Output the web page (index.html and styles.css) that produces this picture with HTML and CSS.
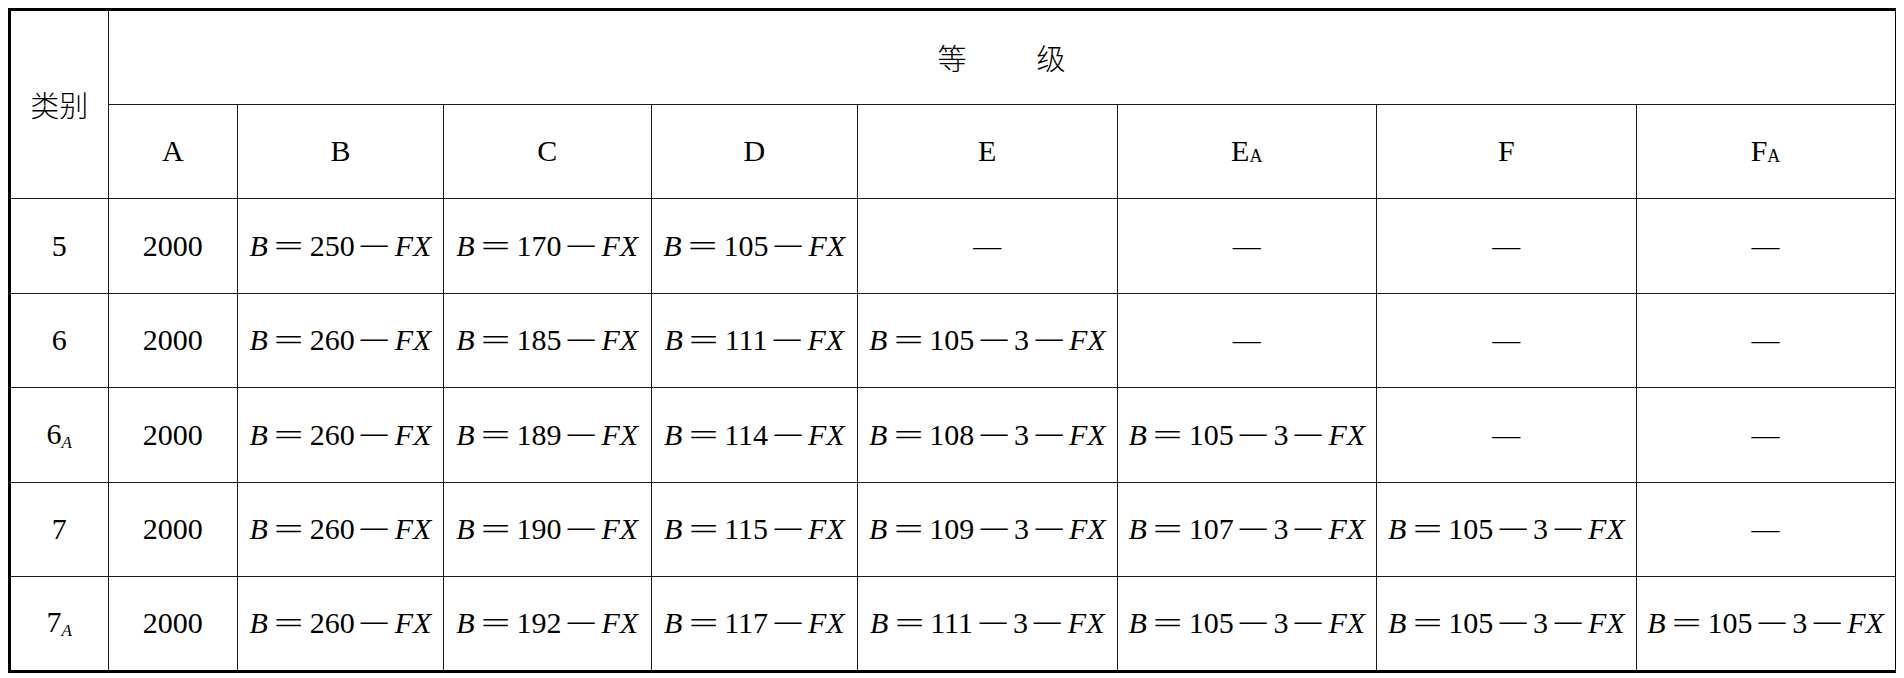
FILE: index.html
```html
<!DOCTYPE html>
<html lang="zh">
<head>
<meta charset="utf-8">
<title>等级表</title>
<link rel="stylesheet" href="styles.css">
</head>
<body>
<table class="grade">
  <colgroup>
    <col class="c-cat"><col class="c-a"><col class="c-b"><col class="c-c"><col class="c-d"><col class="c-e"><col class="c-ea"><col class="c-f"><col class="c-fa">
  </colgroup>
  <tr>
    <td class="cn" rowspan="2">类别</td>
    <td class="cn" colspan="8"><span class="gap">等</span>级</td>
  </tr>
  <tr>
    <td>A</td><td>B</td><td>C</td><td>D</td><td>E</td><td>E<span class="sub">A</span></td><td>F</td><td>F<span class="sub">A</span></td>
  </tr>
  <tr>
    <td>5</td><td>2000</td>
    <td><i>B</i><span class="op">=</span>250<span class="op mi">−</span><i>FX</i></td>
    <td><i>B</i><span class="op">=</span>170<span class="op mi">−</span><i>FX</i></td>
    <td><i>B</i><span class="op">=</span>105<span class="op mi">−</span><i>FX</i></td>
    <td class="nil">—</td><td class="nil">—</td><td class="nil">—</td><td class="nil">—</td>
  </tr>
  <tr>
    <td>6</td><td>2000</td>
    <td><i>B</i><span class="op">=</span>260<span class="op mi">−</span><i>FX</i></td>
    <td><i>B</i><span class="op">=</span>185<span class="op mi">−</span><i>FX</i></td>
    <td><i>B</i><span class="op">=</span>111<span class="op mi">−</span><i>FX</i></td>
    <td><i>B</i><span class="op">=</span>105<span class="op mi">−</span>3<span class="op mi">−</span><i>FX</i></td>
    <td class="nil">—</td><td class="nil">—</td><td class="nil">—</td>
  </tr>
  <tr>
    <td>6<i class="isub">A</i></td><td>2000</td>
    <td><i>B</i><span class="op">=</span>260<span class="op mi">−</span><i>FX</i></td>
    <td><i>B</i><span class="op">=</span>189<span class="op mi">−</span><i>FX</i></td>
    <td><i>B</i><span class="op">=</span>114<span class="op mi">−</span><i>FX</i></td>
    <td><i>B</i><span class="op">=</span>108<span class="op mi">−</span>3<span class="op mi">−</span><i>FX</i></td>
    <td><i>B</i><span class="op">=</span>105<span class="op mi">−</span>3<span class="op mi">−</span><i>FX</i></td>
    <td class="nil">—</td><td class="nil">—</td>
  </tr>
  <tr>
    <td>7</td><td>2000</td>
    <td><i>B</i><span class="op">=</span>260<span class="op mi">−</span><i>FX</i></td>
    <td><i>B</i><span class="op">=</span>190<span class="op mi">−</span><i>FX</i></td>
    <td><i>B</i><span class="op">=</span>115<span class="op mi">−</span><i>FX</i></td>
    <td><i>B</i><span class="op">=</span>109<span class="op mi">−</span>3<span class="op mi">−</span><i>FX</i></td>
    <td><i>B</i><span class="op">=</span>107<span class="op mi">−</span>3<span class="op mi">−</span><i>FX</i></td>
    <td><i>B</i><span class="op">=</span>105<span class="op mi">−</span>3<span class="op mi">−</span><i>FX</i></td>
    <td class="nil">—</td>
  </tr>
  <tr>
    <td>7<i class="isub">A</i></td><td>2000</td>
    <td><i>B</i><span class="op">=</span>260<span class="op mi">−</span><i>FX</i></td>
    <td><i>B</i><span class="op">=</span>192<span class="op mi">−</span><i>FX</i></td>
    <td><i>B</i><span class="op">=</span>117<span class="op mi">−</span><i>FX</i></td>
    <td><i>B</i><span class="op">=</span>111<span class="op mi">−</span>3<span class="op mi">−</span><i>FX</i></td>
    <td><i>B</i><span class="op">=</span>105<span class="op mi">−</span>3<span class="op mi">−</span><i>FX</i></td>
    <td><i>B</i><span class="op">=</span>105<span class="op mi">−</span>3<span class="op mi">−</span><i>FX</i></td>
    <td><i>B</i><span class="op">=</span>105<span class="op mi">−</span>3<span class="op mi">−</span><i>FX</i></td>
  </tr>
</table>
</body>
</html>
```

FILE: styles.css
```css
html, body {
  background: #fff;
}
body {
  margin: 8px;
  color: #000;
  font-family: "Liberation Serif", "Times New Roman", serif;
  font-size: 30px;
}
.grade {
  width: 1888px;
  border-collapse: collapse;
  table-layout: fixed;
  border: 3px solid #000;
}
.c-cat { width: 98.5px; }
.c-a { width: 129.5px; }
.c-b { width: 206px; }
.c-c { width: 207.5px; }
.c-d { width: 206.5px; }
.c-e, .c-ea, .c-f { width: 259.5px; }
.c-fa { width: 260px; }
.grade tr {
  height: 94.5px;
}
.grade td {
  border: 1px solid #1a1a1a;
  padding: 0;
  text-align: center;
  vertical-align: middle;
  white-space: nowrap;
  line-height: 1;
}
.cn {
  font-family: "Noto Sans CJK SC", "Noto Sans CJK JP", sans-serif;
  font-weight: 300;
  font-size: 29px;
}
.gap {
  margin-right: 70px;
}
.grade i {
  font-style: italic;
}
.op {
  display: inline-block;
  font-style: normal;
  transform: scaleX(1.75);
  margin: 0 12.5px;
}
.op.mi {
  transform: scaleX(1.95);
  margin: 0 11.5px;
}
.sub {
  font-size: 18px;
  vertical-align: -1px;
}
.isub {
  font-size: 17px;
  vertical-align: -4px;
}
.nil {
  font-size: 28px;
}
```
